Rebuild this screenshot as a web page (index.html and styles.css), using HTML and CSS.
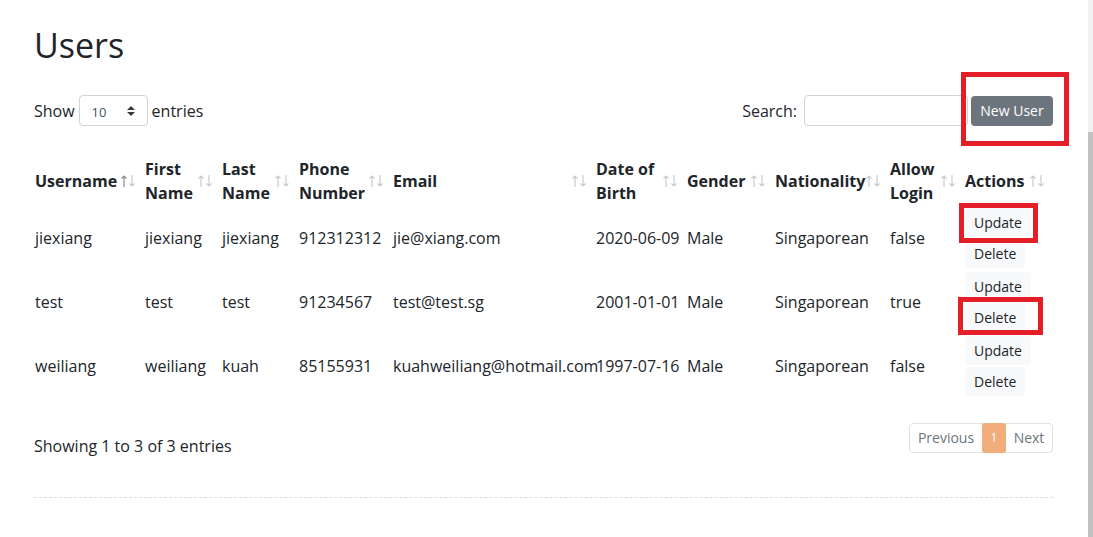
FILE: index.html
```html
<!DOCTYPE html>
<html lang="en">
<head>
<meta charset="utf-8">
<title>Users</title>
<link rel="stylesheet" href="styles.css">
</head>
<body>
<div class="page">
  <main class="content">
    <h1 class="title">Users</h1>

    <div class="controls">
      <div class="length">
        <span>Show</span>
        <div class="select"><span class="select-val">10</span>
          <svg class="select-arrow" width="8" height="10" viewBox="0 0 4 5"><path d="M2 0L0 2h4zm0 5L0 3h4z" fill="#343a40"/></svg>
        </div>
        <span>entries</span>
      </div>
      <div class="right-tools">
        <label class="search-label">Search:</label>
        <div class="search-input"></div>
        <button class="btn-new">New User</button>
      </div>
    </div>

    <table class="users">
      <colgroup>
        <col class="c1"><col class="c2"><col class="c3"><col class="c4"><col class="c5">
        <col class="c6"><col class="c7"><col class="c8"><col class="c9"><col class="c10">
      </colgroup>
      <thead>
        <tr>
          <th><div class="th"><span>Username</span><svg class="sort asc" width="16" height="16" viewBox="0 0 16 16"><path class="up" d="M4 14V3M1.5 5.5L4 3l2.5 2.5"/><path class="down" d="M12 2v11M9.5 10.5L12 13l2.5-2.5"/></svg></div></th>
          <th><div class="th"><span>First<br>Name</span><svg class="sort" width="16" height="16" viewBox="0 0 16 16"><path class="up" d="M4 14V3M1.5 5.5L4 3l2.5 2.5"/><path class="down" d="M12 2v11M9.5 10.5L12 13l2.5-2.5"/></svg></div></th>
          <th><div class="th"><span>Last<br>Name</span><svg class="sort" width="16" height="16" viewBox="0 0 16 16"><path class="up" d="M4 14V3M1.5 5.5L4 3l2.5 2.5"/><path class="down" d="M12 2v11M9.5 10.5L12 13l2.5-2.5"/></svg></div></th>
          <th><div class="th"><span>Phone<br>Number</span><svg class="sort" width="16" height="16" viewBox="0 0 16 16"><path class="up" d="M4 14V3M1.5 5.5L4 3l2.5 2.5"/><path class="down" d="M12 2v11M9.5 10.5L12 13l2.5-2.5"/></svg></div></th>
          <th><div class="th"><span>Email</span><svg class="sort" width="16" height="16" viewBox="0 0 16 16"><path class="up" d="M4 14V3M1.5 5.5L4 3l2.5 2.5"/><path class="down" d="M12 2v11M9.5 10.5L12 13l2.5-2.5"/></svg></div></th>
          <th><div class="th"><span>Date of<br>Birth</span><svg class="sort" width="16" height="16" viewBox="0 0 16 16"><path class="up" d="M4 14V3M1.5 5.5L4 3l2.5 2.5"/><path class="down" d="M12 2v11M9.5 10.5L12 13l2.5-2.5"/></svg></div></th>
          <th><div class="th"><span>Gender</span><svg class="sort" width="16" height="16" viewBox="0 0 16 16"><path class="up" d="M4 14V3M1.5 5.5L4 3l2.5 2.5"/><path class="down" d="M12 2v11M9.5 10.5L12 13l2.5-2.5"/></svg></div></th>
          <th><div class="th"><span>Nationality</span><svg class="sort" width="16" height="16" viewBox="0 0 16 16"><path class="up" d="M4 14V3M1.5 5.5L4 3l2.5 2.5"/><path class="down" d="M12 2v11M9.5 10.5L12 13l2.5-2.5"/></svg></div></th>
          <th><div class="th"><span>Allow<br>Login</span><svg class="sort" width="16" height="16" viewBox="0 0 16 16"><path class="up" d="M4 14V3M1.5 5.5L4 3l2.5 2.5"/><path class="down" d="M12 2v11M9.5 10.5L12 13l2.5-2.5"/></svg></div></th>
          <th><div class="th"><span>Actions</span><svg class="sort" width="16" height="16" viewBox="0 0 16 16"><path class="up" d="M4 14V3M1.5 5.5L4 3l2.5 2.5"/><path class="down" d="M12 2v11M9.5 10.5L12 13l2.5-2.5"/></svg></div></th>
        </tr>
      </thead>
      <tbody>
        <tr>
          <td>jiexiang</td><td>jiexiang</td><td>jiexiang</td><td>912312312</td><td>jie@xiang.com</td>
          <td>2020-06-09</td><td>Male</td><td>Singaporean</td><td>false</td>
          <td><div class="actions"><button class="btn-light">Update</button><button class="btn-light">Delete</button></div></td>
        </tr>
        <tr>
          <td>test</td><td>test</td><td>test</td><td>91234567</td><td>test@test.sg</td>
          <td>2001-01-01</td><td>Male</td><td>Singaporean</td><td>true</td>
          <td><div class="actions"><button class="btn-light">Update</button><button class="btn-light">Delete</button></div></td>
        </tr>
        <tr>
          <td>weiliang</td><td>weiliang</td><td>kuah</td><td>85155931</td><td>kuahweiliang@hotmail.com</td>
          <td>1997-07-16</td><td>Male</td><td>Singaporean</td><td>false</td>
          <td><div class="actions"><button class="btn-light">Update</button><button class="btn-light">Delete</button></div></td>
        </tr>
      </tbody>
    </table>

    <div class="footer-row">
      <div class="info">Showing 1 to 3 of 3 entries</div>
      <div class="pager">
        <span class="pg pg-prev">Previous</span>
        <span class="pg pg-active">1</span>
        <span class="pg pg-next">Next</span>
      </div>
    </div>

    <hr class="dashed">
  </main>
  <aside class="scrollbar"><div class="thumb"></div></aside>
</div>

<div class="mark mark-new"></div>
<div class="mark mark-update"></div>
<div class="mark mark-delete"></div>
</body>
</html>
```

FILE: styles.css
```css
html, body {
  margin: 0;
  padding: 0;
  background: #fff;
}

body {
  font-family: "Open Sans", "Liberation Sans", sans-serif;
  font-size: 16px;
  line-height: 24px;
  color: #212529;
}

.page {
  display: flex;
  height: 537px;
  overflow: hidden;
}

.content {
  flex: 1;
  padding: 0 35px 0 34px;
  min-width: 0;
}

.scrollbar {
  width: 5px;
  background: #f1f1f1;
  display: flex;
  flex-direction: column;
}

.thumb {
  margin-top: 132px;
  flex: 1;
  background: #c1c1c1;
}

.title {
  margin: 25px 0 0 0;
  font-size: 34px;
  line-height: 41px;
  font-weight: 400;
}

.controls {
  margin-top: 29px;
  height: 31px;
  display: flex;
  justify-content: space-between;
  align-items: center;
}

.length {
  display: flex;
  align-items: center;
  gap: 4px;
}

.select {
  width: 69px;
  height: 31px;
  box-sizing: border-box;
  border: 1px solid #ced4da;
  border-radius: 4px;
  display: flex;
  align-items: center;
  justify-content: space-between;
  padding: 0 12px 0 12px;
  font-size: 13px;
  color: #495057;
}

.select-val {
  padding-top: 3px;
}

.right-tools {
  display: flex;
  align-items: center;
}

.search-label {
  margin-right: 7px;
}

.search-input {
  width: 164px;
  height: 31px;
  box-sizing: border-box;
  border: 1px solid #ced4da;
  border-radius: 4px;
}

.btn-new {
  margin-left: 3px;
  width: 82px;
  height: 30px;
  border: none;
  border-radius: 4px;
  background: #6c757d;
  color: #fff;
  font-family: inherit;
  font-size: 14px;
  padding: 0;
}

.users {
  margin-top: 28px;
  width: 1019px;
  border-collapse: collapse;
  table-layout: fixed;
}

.c1 { width: 110px; }
.c2 { width: 77px; }
.c3 { width: 77px; }
.c4 { width: 94px; }
.c5 { width: 203px; }
.c6 { width: 91px; }
.c7 { width: 88px; }
.c8 { width: 115px; }
.c9 { width: 75px; }
.c10 { width: 89px; }

.users th,
.users td {
  padding: 2px 0 2px 1px;
  text-align: left;
  vertical-align: middle;
  white-space: nowrap;
}

.users th {
  font-weight: 700;
  height: 48px;
  padding-top: 3px;
  padding-bottom: 1px;
}

.th {
  display: flex;
  align-items: center;
  justify-content: space-between;
  padding-right: 8px;
}

.sort {
  flex: none;
  fill: none;
  stroke-width: 1.2;
}

.sort path {
  stroke: #c8cbce;
}

.sort.asc .up {
  stroke: #8a8f94;
}

.users td {
  height: 60px;
}

.actions {
  display: flex;
  flex-direction: column;
  align-items: flex-start;
  gap: 2px;
}

.btn-light {
  background: #f8f9fa;
  border: 1px solid #f8f9fa;
  border-radius: 3px;
  color: #212529;
  font-family: inherit;
  font-size: 14px;
  line-height: 21px;
  padding: 3px 8px;
  margin: 0;
}

.footer-row {
  margin-top: 25px;
  display: flex;
  justify-content: space-between;
  align-items: flex-start;
}

.info {
  padding-top: 11px;
}

.pager {
  display: flex;
  height: 30px;
  box-sizing: border-box;
  border: 1px solid #dee2e6;
  border-radius: 4px;
  font-size: 14px;
  color: #6c757d;
}

.pg {
  display: flex;
  align-items: center;
  justify-content: center;
  height: 28px;
}

.pg-prev {
  width: 72px;
}

.pg-active {
  width: 24px;
  margin-top: -1px;
  height: 30px;
  background: #f1ad7c;
  color: #fff;
  font-size: 12px;
  border-radius: 3px;
}

.pg-next {
  width: 46px;
}

.dashed {
  margin: 39px 0 0 0;
  border: none;
  border-top: 1px dashed #dcdcdc;
  height: 0;
}

.mark {
  position: absolute;
  box-sizing: border-box;
  border: 5px solid #e31e26;
}

.mark-new {
  left: 961px;
  top: 72px;
  width: 108px;
  height: 74px;
}

.mark-update {
  left: 959px;
  top: 203px;
  width: 79px;
  height: 40px;
}

.mark-delete {
  left: 958px;
  top: 297px;
  width: 85px;
  height: 38px;
}
```
